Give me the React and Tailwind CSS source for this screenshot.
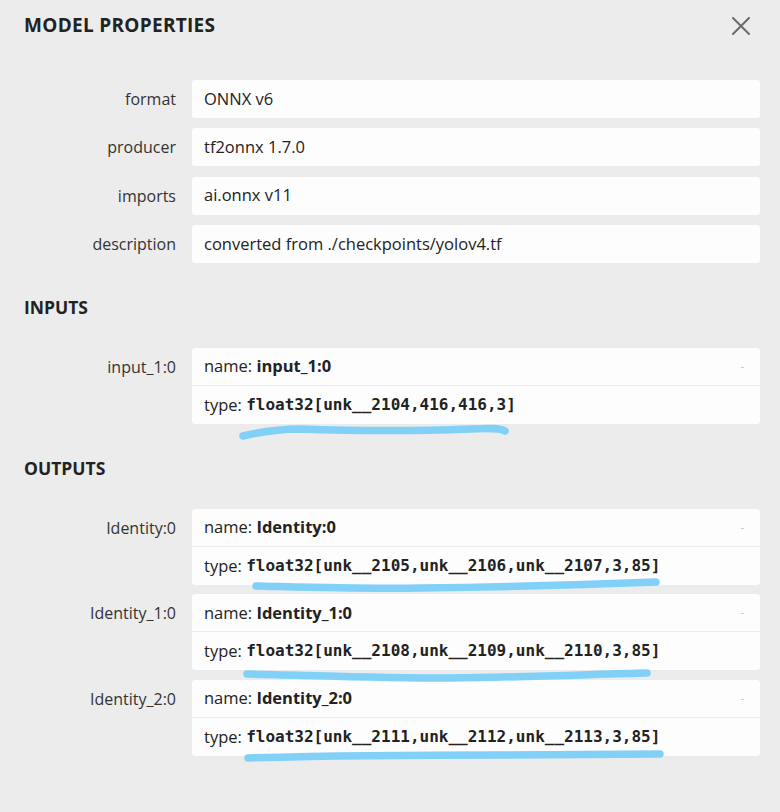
const props = [
  { label: 'format', value: 'ONNX v6' },
  { label: 'producer', value: 'tf2onnx 1.7.0' },
  { label: 'imports', value: 'ai.onnx v11' },
  { label: 'description', value: 'converted from ./checkpoints/yolov4.tf' },
];

const inputs = [{ label: 'input_1:0', name: 'input_1:0', type: 'float32[unk__2104,416,416,3]' }];

const outputs = [
  { label: 'Identity:0', name: 'Identity:0', type: 'float32[unk__2105,unk__2106,unk__2107,3,85]' },
  { label: 'Identity_1:0', name: 'Identity_1:0', type: 'float32[unk__2108,unk__2109,unk__2110,3,85]' },
  { label: 'Identity_2:0', name: 'Identity_2:0', type: 'float32[unk__2111,unk__2112,unk__2113,3,85]' },
];

function Label({ children }) {
  return <div className="text-right text-[16px] leading-[38px] text-[#333]">{children}</div>;
}

function ArgBox({ name, type }) {
  return (
    <div className="bg-[#fdfdfd] rounded-[3px] shadow-[0_0_1px_rgba(0,0,0,0.06)]">
      <div className="h-[38px] flex items-center justify-between pl-3 pr-4 border-b border-[#ececec]">
        <span className="text-[16.5px] text-[#222]">
          name: <b className="font-bold">{name}</b>
        </span>
        <span className="text-[10px] text-[#bbb]">-</span>
      </div>
      <div className="h-[38px] flex items-center pl-3">
        <span className="text-[16.5px] text-[#222]">type:&nbsp;</span>
        <code className="font-['DejaVu_Sans_Mono',monospace] font-bold text-[16px] text-[#222]">{type}</code>
      </div>
    </div>
  );
}

function Section({ title, items }) {
  return (
    <>
      <h2 className="pl-6 mt-[32px] text-[17.5px] leading-[24px] font-bold text-[#222]">{title}</h2>
      <div className="grid grid-cols-[176px_1fr] gap-x-4 gap-y-[9.5px] pr-5 mt-[29px]">
        {items.map((a) => (
          <div key={a.label} className="contents">
            <Label>{a.label}</Label>
            <ArgBox name={a.name} type={a.type} />
          </div>
        ))}
      </div>
    </>
  );
}

export default function App() {
  return (
    <div className="relative w-[780px] min-h-[812px] bg-[#ececec] font-['Open_Sans',sans-serif] pb-14">
      <div className="flex items-center justify-between pl-6 pr-[30px] pt-[13px] h-[38px]">
        <h1 className="text-[19px] leading-[25px] font-bold tracking-[0.3px] text-[#222]">MODEL PROPERTIES</h1>
        <svg width="18" height="18" viewBox="0 0 18 18" className="text-[#6b6b6b]">
          <path d="M1 1 L17 17 M17 1 L1 17" stroke="currentColor" strokeWidth="2" strokeLinecap="round" />
        </svg>
      </div>

      <div className="grid grid-cols-[176px_1fr] gap-x-4 gap-y-[10.3px] pr-5 mt-[42px]">
        {props.map((p) => (
          <div key={p.label} className="contents">
            <Label>{p.label}</Label>
            <div className="h-[38px] bg-[#fdfdfd] rounded-[3px] flex items-center pl-3 text-[16.5px] text-[#222]">
              {p.value}
            </div>
          </div>
        ))}
      </div>

      <Section title="INPUTS" items={inputs} />
      <Section title="OUTPUTS" items={outputs} />

      {/* hand-drawn highlight strokes over the type values */}
      <svg className="absolute inset-0 pointer-events-none" width="780" height="812" viewBox="0 0 780 812">
        <g fill="none" stroke="#80d0f8" strokeWidth="7.5" strokeLinecap="round" strokeLinejoin="round">
          <path d="M243 436 C 260 432, 280 429, 300 429 C 360 431, 420 431, 470 429 C 490 428, 500 428, 505 431" />
          <path d="M256 586 C 300 587, 360 589, 420 588 C 500 587, 580 585, 656 582" />
          <path d="M247 674 C 300 675, 380 678, 450 678 C 530 677, 600 674, 647 673" />
          <path d="M248 758 C 320 756, 420 755, 500 755 C 580 755, 630 754, 660 754" />
        </g>
      </svg>
    </div>
  );
}
